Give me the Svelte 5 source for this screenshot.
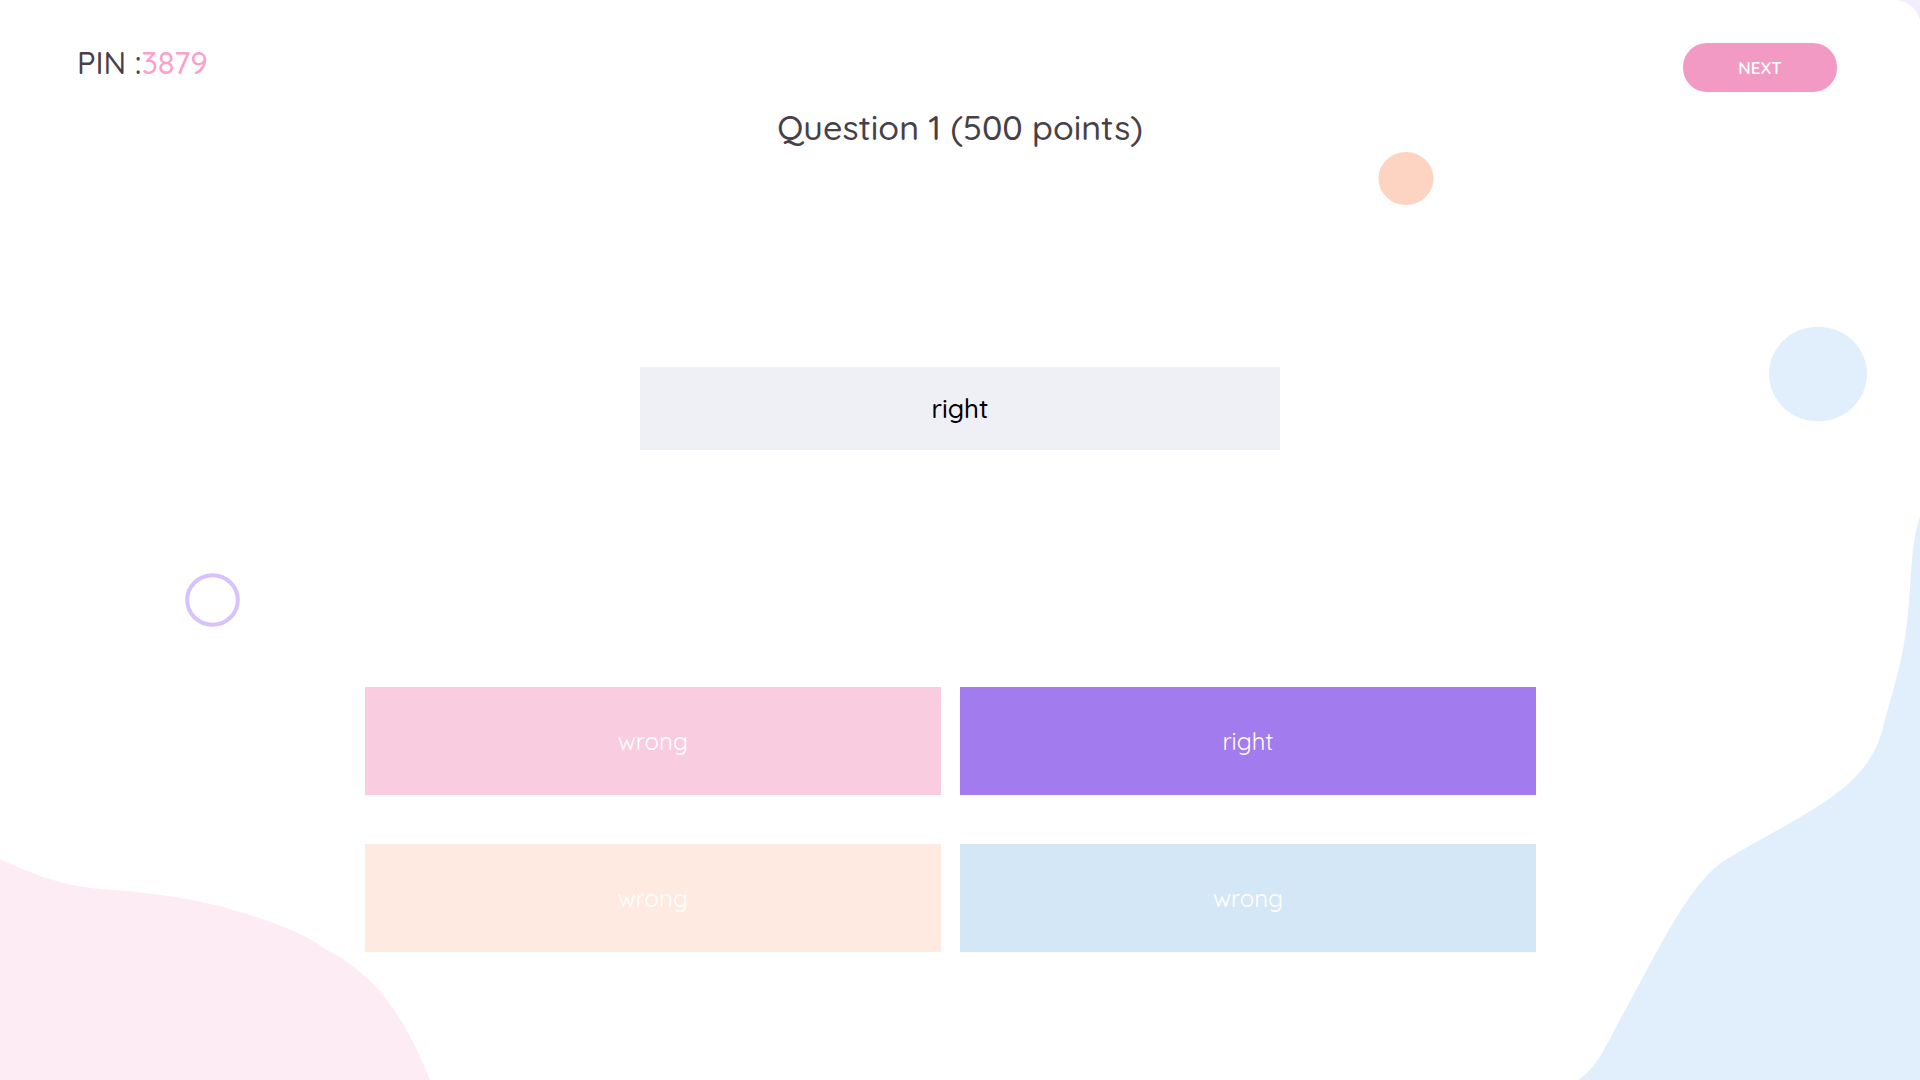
<script>
  const pin = '3879';
  const question = { number: 1, points: 500, text: 'right' };
  const answers = [
    { text: 'wrong', tone: 'pink' },
    { text: 'right', tone: 'purple' },
    { text: 'wrong', tone: 'peach' },
    { text: 'wrong', tone: 'blue' }
  ];
</script>

<div class="page">
  <svg class="backdrop" viewBox="0 0 1920 1080" preserveAspectRatio="none" aria-hidden="true">
    <path fill="#f1ecfe" d="M1898 0 H1920 V20 C1917 9 1909 2 1898 0 Z" />
    <path fill="#feecf4" d="M0 859 C30 873 60 885 95 888.500 C165 893 210 902 247 914 C285 926 310 937 325 949 C375 974 404 1015 430 1080 H0 Z" />
    <path fill="#e1effd" d="M1920 516 C1910 548 1912 580 1907 622 C1903 660 1893 690 1882 731 C1866 790 1806 812 1727 859 C1692 879 1660 946 1627 1007 C1608 1040 1599 1067 1578 1080 H1920 Z" />
    <ellipse fill="#fdd4c2" cx="1406" cy="178.500" rx="27.500" ry="26.500" />
    <ellipse fill="#e1effd" cx="1818" cy="374" rx="49" ry="47.300" />
    <ellipse fill="none" stroke="#d6c2fd" stroke-width="4" cx="212.500" cy="600" rx="25.300" ry="24.800" />
  </svg>

  <header class="bar">
    <p class="pin">PIN :<span>{pin}</span></p>
    <button class="next" type="button">NEXT</button>
  </header>

  <main>
    <h1>Question {question.number} ({question.points} points)</h1>
    <p class="prompt">{question.text}</p>
    <div class="answers">
      {#each answers as answer}
        <button class="answer {answer.tone}" type="button">{answer.text}</button>
      {/each}
    </div>
  </main>
</div>

<style>
  :global(body) {
    margin: 0;
    background: #fff;
  }

  .page {
    position: relative;
    isolation: isolate;
    box-sizing: border-box;
    min-height: 100vh;
    padding-bottom: 40px;
    overflow: hidden;
    font-family: Quicksand, Lato, 'Open Sans', sans-serif;
    color: #484049;
  }

  .backdrop {
    position: absolute;
    inset: 0;
    z-index: -1;
    width: 100%;
    height: 100%;
  }

  .bar {
    display: flex;
    justify-content: space-between;
    align-items: flex-start;
    padding: 43px 83px 0 77px;
  }

  .pin {
    margin: 0;
    font-size: 31px;
    font-weight: 500;
    line-height: 40px;
  }

  .pin span {
    color: #fd9fcb;
  }

  .next {
    width: 154px;
    padding: 13px 0 12px;
    border: 0;
    border-radius: 24px;
    background: #f39ac4;
    color: #fff;
    font: inherit;
    font-size: 17px;
    font-weight: 600;
    line-height: 24px;
  }

  main {
    display: flex;
    flex-direction: column;
    align-items: center;
  }

  h1 {
    margin: 14px 0 0;
    font-size: 34px;
    font-weight: 500;
    line-height: 44px;
  }

  .prompt {
    box-sizing: border-box;
    width: 33.333%;
    margin: 217px 0 0;
    padding: 24px;
    background: #eff0f6;
    color: #000;
    font-size: 26px;
    font-weight: 500;
    line-height: 35px;
    text-align: center;
  }

  .answers {
    display: grid;
    grid-template-columns: 1fr 1fr;
    gap: 49px 19px;
    align-self: flex-start;
    width: 61%;
    margin: 237px 0 0 19%;
  }

  .answer {
    padding: 36px;
    border: 0;
    color: #fff;
    font: inherit;
    font-size: 24px;
    line-height: 36px;
  }

  .pink { background: #f9cce0; }
  .purple { background: #a27bee; }
  .peach { background: #feeae0; }
  .blue { background: #d4e7f6; }
</style>
